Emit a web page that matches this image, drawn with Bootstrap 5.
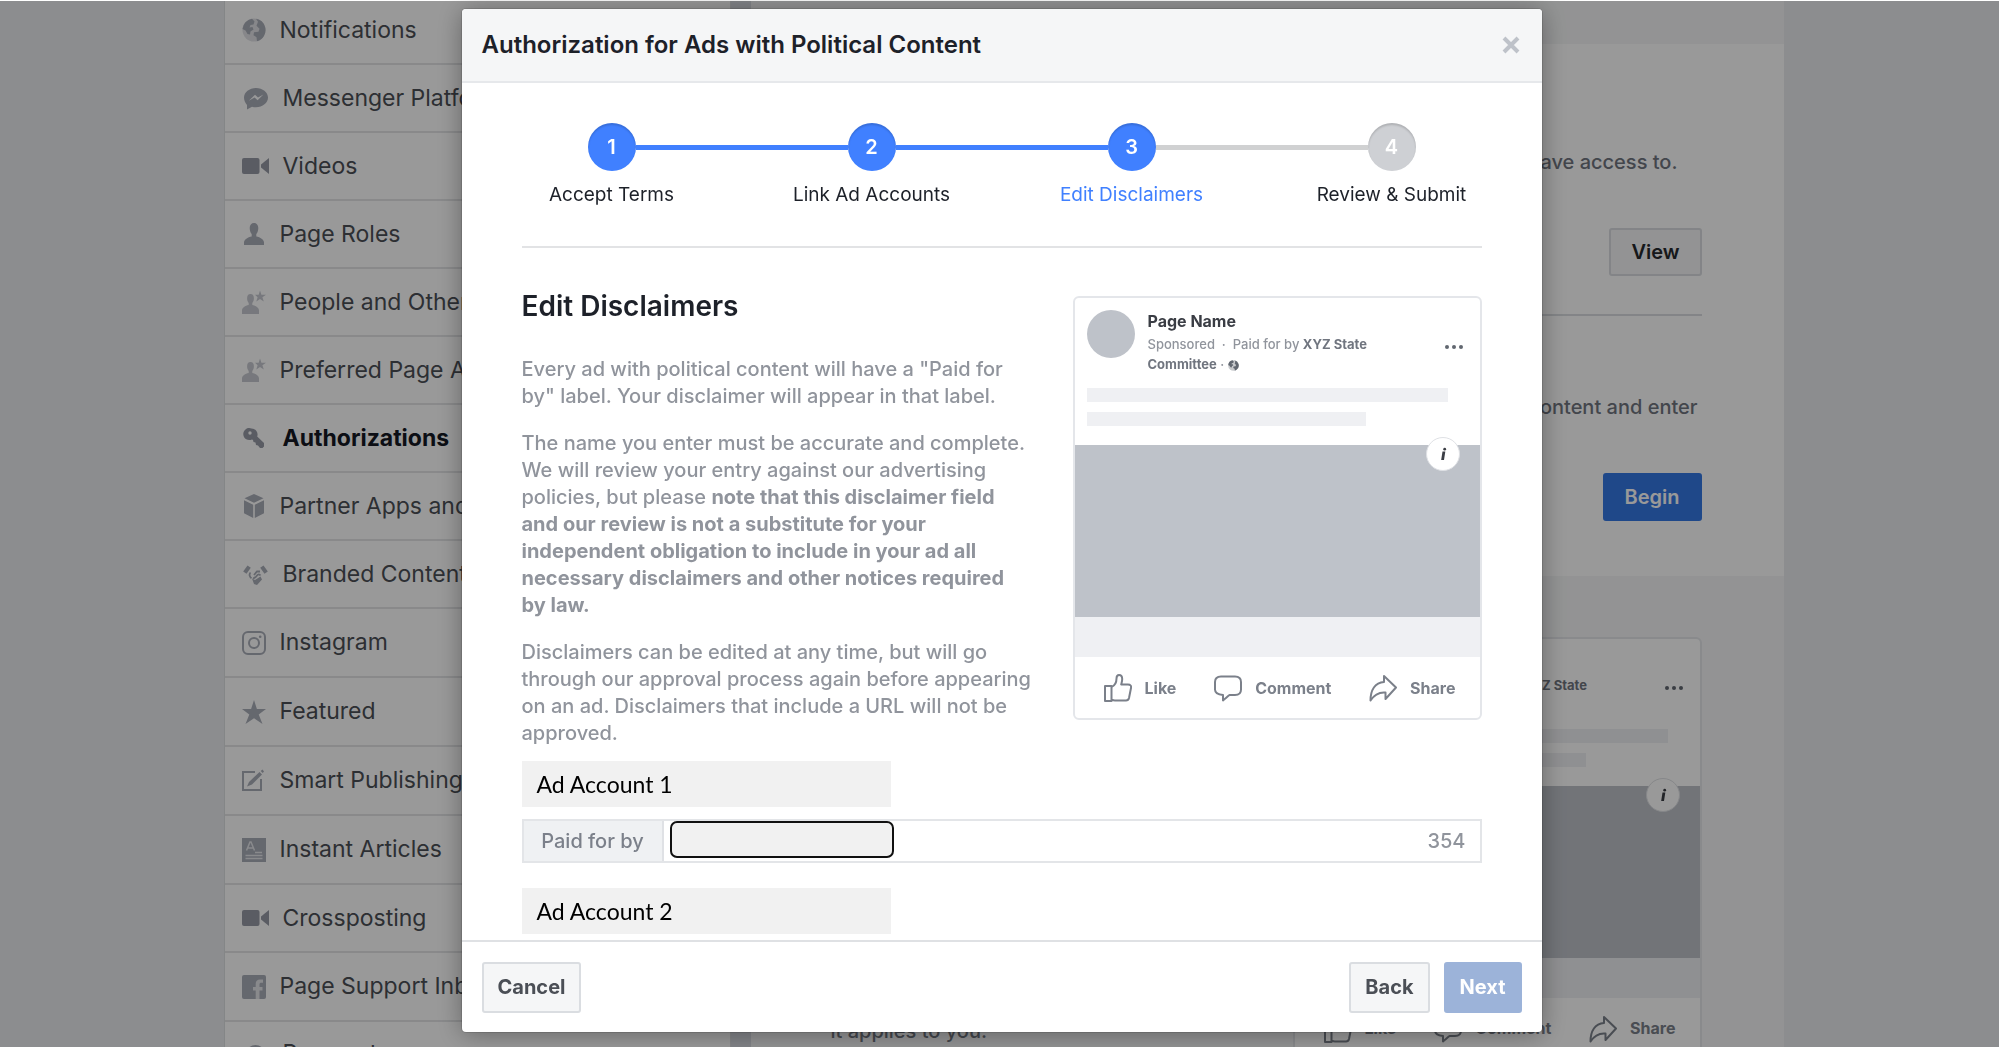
<!DOCTYPE html>
<html lang="en">
<head>
<meta charset="utf-8">
<meta name="viewport" content="width=device-width, initial-scale=1">
<title>Authorization for Ads with Political Content</title>
<link rel="stylesheet" href="https://cdn.jsdelivr.net/npm/bootstrap@5.3.0/dist/css/bootstrap.min.css">
<script src="https://cdn.jsdelivr.net/npm/bootstrap@5.3.0/dist/js/bootstrap.bundle.min.js"></script>
<style>
body{font-family:Inter,"Liberation Sans",sans-serif;background:#fff;height:100vh;overflow:hidden;color:#1d2129}
.page{margin-top:1px;height:100vh;background:#e9ebee;overflow:hidden;padding-left:8px}
.shell{width:100%;max-width:1560px}
.side{width:507px;flex:none;background:#fff;border-left:1px solid #dddfe2;border-right:1px solid #dddfe2;margin-top:-4px}
.side-link{height:68px;flex:none;padding-left:17px;gap:14px;border-bottom:2px solid #e4e5e7;font-size:23px;color:#4b4f56;text-decoration:none;white-space:nowrap}
.side-link.tall{height:69px}
.side-link:last-child{height:64px}
.side-link.on{font-weight:700;color:#141823}
.ico{width:24px;height:24px;flex:none;fill:#a9adb8;color:#a9adb8}
.ico.wide{width:27px}
.ico.deep{fill:#969aa6}
.ico.pale{fill:#c6c9d0}
.gutter{width:20px;flex:none;background:#d9dce3}
.pane{background:#f5f6f7}
.pane-top{height:43px}
.pane-white{background:#fff;height:532px;padding:105px 82px 0 80px;font-size:20px;font-weight:500;line-height:27px;color:#70757f}
.pane-act{padding-top:52px}
.pane-rule{border-top:2px solid #dadde1;margin:38px 0 78px;opacity:1}
.pane-low{padding:61px 82px 0 80px;font-size:20px;font-weight:500;line-height:27px;color:#70757f}
.btn-fb{font-size:20px;font-weight:600;line-height:24px;border-radius:3px;border:2px solid #dadde1;background:#f5f6f7;color:#4b4f56}
.btn-fb.dark{color:#26292e}
.btn-blue,.btn-blue:disabled{background:#3578e5;border-color:#3578e5;color:#fff;opacity:1}
.btn-blue:disabled{background:#9cb3d9;border-color:#9cb3d9}
.pane .btn-fb{padding:10px 20px}
.post{width:409px;border:2px solid #e4e6ea;border-radius:6px;background:#fff;color:#7b808a;overflow:hidden}
.post-head{height:90px;padding:12px 12px 0;gap:13px}
.face{width:48px;height:48px;background:#bec2c9;flex:none}
.post-name{font-size:16px;line-height:22px;margin-bottom:2px;font-weight:700;color:#3a3d44}
.post-meta{font-size:13px;line-height:20px;font-weight:500;color:#90949c}
.post-meta b{font-weight:700;color:#70757f}
.post-dots{width:20px;height:6px;fill:#616770;margin-top:34px;margin-right:4px}
.post-lines{padding-left:12px;height:57px}
.post-line{height:14px;background:#eff0f3;margin-bottom:10px}
.post-shot{height:172px;background:#bec2c9;position:relative}
.post-i{position:absolute;right:20px;top:-8px;width:34px;height:34px;border:1px solid #dfe1e5;background:#fff}
.post-band{height:40px;background:#eff0f3}
.post-acts{height:61px;padding:0 24px 0 29px;font-size:16px;font-weight:700}
.post-act{gap:13px}
.act-ico{width:28px;height:28px;fill:none;stroke:#7b808a;stroke-width:2;stroke-linejoin:round;stroke-linecap:round}
.veil{position:fixed;inset:1px 0 0 0;background:rgba(0,0,0,.4);padding:8px 0 0 4px}
.dlg{width:1080px;background:#fff;border-radius:4px;box-shadow:0 2px 26px rgba(0,0,0,.35),0 0 0 1px rgba(0,0,0,.12);overflow:hidden}
.dlg-head{height:74px;padding:0 20px;background:#f5f6f7;border-bottom:2px solid #e6e8eb}
.dlg-head h1{font-size:24px;font-weight:600;line-height:28px;margin:0}
.x-btn{width:22px;height:22px;border:0;background:none;padding:0}
.dlg-main{padding:40px 60px 6px}
.steps{padding:0 30px;border-bottom:2px solid #e2e3e5;height:125px}
.step{flex:none;width:140px;margin:0 -10px;font-size:19px;line-height:24px;text-align:center;white-space:nowrap}
.dot-n{width:48px;height:48px;border-radius:50%;background:#4080ff;color:#fff;font-size:20px;font-weight:600;margin-bottom:12px;box-shadow:inset 0 2px 2px rgba(0,0,0,.15)}
.dot-n.off{background:#ced0d4}
.step-bar{height:5px;background:#4080ff;flex:1;margin:22px -36px 0}
.step-bar.off{background:#d0d1d2}
.now{color:#4080ff}
.intro{padding-top:48px}
.intro h2{font-size:28px;line-height:32px;font-weight:600;margin:-6px 0 34px}
.intro p{font-size:20px;line-height:27px;font-weight:500;color:#90949c;margin:0 0 20px;white-space:nowrap}
.intro p b{font-weight:700}
.acct{width:369px;height:46px;padding-left:15px;background:#f1f1f1;color:#000;font-family:Lato,sans-serif;font-size:23px}
.acct.first{margin-top:14px}
.paid{margin:12px 0 25px;height:44px;border:2px solid #e3e5e8}
.paid label{width:140px;background:#eff1f3;border-right:2px solid #dfe1e5;font-size:20px;font-weight:500;color:#7b808a}
.paid input{width:224px;height:37px;margin-left:6px;border:2px solid #111;border-radius:7px;background:#f1f1f1;outline:0}
.paid output{font-size:20px;font-weight:500;color:#90949c;padding-right:14px}
.dlg-foot{height:92px;border-top:2px solid #dfe1e4;padding:0 20px;gap:14px}
.dlg-foot .btn-fb{padding:11px 14px;height:51px;font-weight:700}
</style>
</head>
<body>
<svg class="d-none" xmlns="http://www.w3.org/2000/svg">
<symbol id="i-globe" viewBox="0 0 24 24"><circle cx="12" cy="12" r="11.500" opacity=".35"/><path d="M10 .7A11.500 11.500 0 0 0 .5 11l3 1.500 2 3.500 2.500.5.500-3 3-2-1-2.500-3 .5 1-2.500 3-.5 1-3zM14 .7l2 3-1.500 4 3 3-1 3-4.500.5-.5 3 3 2 .5 4a11.500 11.500 0 0 0 8-14.500A11.500 11.500 0 0 0 14 .7z"/></symbol>
<symbol id="i-msg" viewBox="0 0 27 24"><path fill-rule="evenodd" d="M14 2c6.600 0 12 4.300 12 9.600s-5.400 9.700-12 9.700c-1.400 0-2.800-.2-4-.6L5 23.500v-4.600C3.200 17 2 14.500 2 11.600 2 6.300 7.400 2 14 2zM6.800 14.800l5.800-3.200 3 2.600 5.800-5.800-5.400 3-3-2.700z"/></symbol>
<symbol id="i-cam" viewBox="0 0 27 24"><rect y="4" width="17.500" height="16" rx="2"/><path d="M27 4v16l-8-6.500v-3z"/></symbol>
<symbol id="i-user" viewBox="0 0 24 24"><path d="M12 1c2.700 0 4.300 2 4.300 5 0 2.500-.8 4.800-2 6v2.500c4 .8 7.700 3 7.700 6V23H2v-2.500c0-3 3.700-5.200 7.700-6V12c-1.200-1.200-2-3.500-2-6 0-3 1.600-5 4.300-5z"/></symbol>
<symbol id="i-userstar" viewBox="0 0 24 24"><path d="M8.500 4c2.200 0 3.400 1.600 3.400 4.200 0 2-.6 3.700-1.600 4.800V15c3.500.8 6.700 2.600 6.700 5.500V24H0v-3.500C0 17.600 3.200 15.800 6.700 15v-2c-1-1.100-1.600-2.800-1.600-4.800C5.100 5.600 6.300 4 8.500 4z"/><path d="M18 .5l1.400 4.200H24l-3.600 2.600 1.400 4.200-3.800-2.600-3.700 2.600 1.300-4.200L13 4.700h3.700z"/></symbol>
<symbol id="i-key" viewBox="0 0 27 24"><path fill-rule="evenodd" d="M9.500 2.500a6 6 0 0 1 5.700 8L22 17v3.500L20.500 22H18l-2-2.500-2-.5-.5-2.500-2-.5-.5-2-1-.6A6 6 0 1 1 9.500 2.500zM8 5.300a1.700 1.700 0 1 0 0 3.400 1.700 1.700 0 0 0 0-3.400z"/></symbol>
<symbol id="i-box" viewBox="0 0 24 24"><path d="M12 0l9.500 4.300L12 8.800 2.500 4.300zM2 6.300l9.200 4.400V24L2 19.300zM22 6.300l-9.200 4.400V24l9.200-4.700z"/></symbol>
<symbol id="i-shake" viewBox="0 0 27 24"><path d="M5.500 3.500l3.300 2.300-4.300 6L1.200 9.500zM21.500 3.500l-3.300 2.300 4.300 6 3.300-2.300z"/><g fill="none" stroke="currentColor" stroke-width="1.800"><path d="M8.500 10.500c-1.800 2-.8 4.500 1 5.800M11 16c2 .5 3-1 4-2.500s2.500-1.500 3.500 0M12 13l3-3.500h3"/></g><path d="M10 16.500l3 1.500 5.500-3.500 1.500 3-5 5.500-3-1z"/></symbol>
<symbol id="i-insta" viewBox="0 0 24 24"><g fill="none" stroke="currentColor" stroke-width="2"><rect x="1" y="1" width="22" height="22" rx="5"/><circle cx="12" cy="12" r="5"/></g><circle cx="18.200" cy="5.800" r="1.300"/></symbol>
<symbol id="i-star" viewBox="0 0 24 24"><path d="M12 0l2.900 9H24l-7.300 5.500L20.500 24 12 18.200 3.500 24l3.800-9.500L0 9h9.100z"/></symbol>
<symbol id="i-edit" viewBox="0 0 24 24"><path fill="none" stroke="currentColor" stroke-width="2" d="M13 3H1v18h18V10"/><path d="M17.500 3l2.500 2.500L10 15.500 5 17.500 7 13zM18.700 2L20.500.5 22 2.500l-1.300 1.600z"/></symbol>
<symbol id="i-article" viewBox="0 0 24 24"><path d="M0 0h24v24H0z"/><path fill="none" stroke="#e4e6ea" stroke-width="1.500" d="M4.500 12.500L8 4h1l3.500 8.500M6 10h5M13 14.500h7M3.500 17.500h17M3.500 20.500h17"/></symbol>
<symbol id="i-fb" viewBox="0 0 24 24"><path d="M2 0h20a2 2 0 0 1 2 2v20a2 2 0 0 1-2 2H2a2 2 0 0 1-2-2V2a2 2 0 0 1 2-2z"/><path fill="#e4e6ea" d="M17.500 24v-8.500h3V12h-3V9.500c0-1.200.5-1.800 1.800-1.800H21V4.500h-3c-2.800 0-4.300 1.700-4.300 4.300V12H11v3.500h2.700V24z"/></symbol>
<symbol id="i-coin" viewBox="0 0 27 24"><circle cx="13.500" cy="14" r="10"/></symbol>
<symbol id="i-like" viewBox="0 0 28 28"><path d="M1 12h6.500v15H1zM7.500 13c3.500-1.500 5-4 5-8.500 0-2 .8-3.500 2.500-3.500 2.300 0 3.200 2 3.200 4 0 2.300-.7 4-1 5.500H24c2.500 0 3.500 1.500 3 3.500l-2 10c-.5 2-1.500 2.500-3 2.500H11c-1.500 0-2.500-.5-3.500-1"/></symbol>
<symbol id="i-comment" viewBox="0 0 28 28"><path d="M7 2.500h14c3.500 0 6 2 6 5.500v7.500c0 3.500-2.500 5.500-6 5.500h-5.500c-2 1.500-4 3.500-6.500 5.500V21C4.500 20.500 1 19 1 15.500V8c0-3.500 2.500-5.500 6-5.500z"/></symbol>
<symbol id="i-share" viewBox="0 0 28 28"><path d="M15 2l12 11.500L16.500 25v-6.500C11 18 6 19.500 1.500 26.500 1.500 16 6 8.500 15 8z"/></symbol>
</svg>

<div class="page d-flex justify-content-center">
<div class="shell d-flex">
<nav class="side d-flex flex-column">
<a href="#" class="side-link d-flex align-items-center"><svg class="ico"><use href="#i-globe"/></svg>Notifications</a>
<a href="#" class="side-link d-flex align-items-center"><svg class="ico wide"><use href="#i-msg"/></svg>Messenger Platform</a>
<a href="#" class="side-link d-flex align-items-center"><svg class="ico wide deep"><use href="#i-cam"/></svg>Videos</a>
<a href="#" class="side-link d-flex align-items-center"><svg class="ico"><use href="#i-user"/></svg>Page Roles</a>
<a href="#" class="side-link d-flex align-items-center"><svg class="ico pale"><use href="#i-userstar"/></svg>People and Other Pages</a>
<a href="#" class="side-link d-flex align-items-center"><svg class="ico pale"><use href="#i-userstar"/></svg>Preferred Page Audience</a>
<a href="#" class="side-link on d-flex align-items-center"><svg class="ico wide deep"><use href="#i-key"/></svg>Authorizations</a>
<a href="#" class="side-link d-flex align-items-center"><svg class="ico"><use href="#i-box"/></svg>Partner Apps and Services</a>
<a href="#" class="side-link d-flex align-items-center"><svg class="ico wide"><use href="#i-shake"/></svg>Branded Content</a>
<a href="#" class="side-link tall d-flex align-items-center"><svg class="ico"><use href="#i-insta"/></svg>Instagram</a>
<a href="#" class="side-link tall d-flex align-items-center"><svg class="ico"><use href="#i-star"/></svg>Featured</a>
<a href="#" class="side-link tall d-flex align-items-center"><svg class="ico"><use href="#i-edit"/></svg>Smart Publishing</a>
<a href="#" class="side-link tall d-flex align-items-center"><svg class="ico"><use href="#i-article"/></svg>Instant Articles</a>
<a href="#" class="side-link d-flex align-items-center"><svg class="ico wide deep"><use href="#i-cam"/></svg>Crossposting</a>
<a href="#" class="side-link tall d-flex align-items-center"><svg class="ico"><use href="#i-fb"/></svg>Page Support Inbox</a>
<a href="#" class="side-link d-flex align-items-center"><svg class="ico wide"><use href="#i-coin"/></svg>Payments</a>
</nav>
<div class="gutter"></div>
<main class="pane flex-grow-1">
<div class="pane-top"></div>
<section class="pane-white">
<p class="text-end me-4 mb-0">have access to.</p>
<div class="pane-act d-flex justify-content-end"><button type="button" class="btn btn-fb dark">View</button></div>
<hr class="pane-rule">
<p class="text-end me-1 mb-0">content and enter</p>
<div class="pane-act d-flex justify-content-end"><button type="button" class="btn btn-fb btn-blue">Begin</button></div>
</section>
<section class="pane-low d-flex justify-content-between">
<p class="mb-3 align-self-end">it applies to you.</p>
<article class="post">
<div class="post-head d-flex"><div class="face rounded-circle"></div><div class="flex-grow-1"><div class="post-name">Page Name</div><div class="post-meta">Sponsored &nbsp;·&nbsp; Paid for by <b>XYZ State<br>Committee</b> · <svg width="11" height="11" fill="#616770"><use href="#i-globe"/></svg></div></div><svg class="post-dots" viewBox="0 0 20 6"><circle cx="3" cy="3" r="2"/><circle cx="10" cy="3" r="2"/><circle cx="17" cy="3" r="2"/></svg></div>
<div class="post-lines"><div class="post-line" style="width:92%"></div><div class="post-line" style="width:71%"></div></div>
<div class="post-shot"><div class="post-i rounded-circle d-flex align-items-center justify-content-center"><svg width="8" height="14" viewBox="0 0 8 14" fill="#3a3d44"><path d="M3.500 4.500h2.800L5 13H2.200z"/><circle cx="5.700" cy="2.200" r="1.400"/></svg></div></div>
<div class="post-band"></div>
<div class="post-acts d-flex align-items-center justify-content-between"><span class="post-act d-flex align-items-center"><svg class="act-ico"><use href="#i-like"/></svg>Like</span><span class="post-act d-flex align-items-center"><svg class="act-ico"><use href="#i-comment"/></svg>Comment</span><span class="post-act d-flex align-items-center"><svg class="act-ico"><use href="#i-share"/></svg>Share</span></div>
</article>
</section>
</main>
</div>
</div>

<div class="veil d-flex justify-content-center align-items-start">
<div class="dlg" role="dialog" aria-labelledby="dlg-title">
<header class="dlg-head d-flex align-items-center justify-content-between">
<h1 id="dlg-title">Authorization for Ads with Political Content</h1>
<button type="button" class="x-btn d-flex align-items-center justify-content-center" aria-label="Close"><svg width="18" height="18" viewBox="0 0 18 18" stroke="#bec2c9" stroke-width="4"><path d="M2 2l14 14M16 2L2 16"/></svg></button>
</header>
<div class="dlg-main">
<div class="steps d-flex">
<div class="step d-flex flex-column align-items-center"><span class="dot-n d-flex align-items-center justify-content-center">1</span>Accept Terms</div>
<div class="step-bar"></div>
<div class="step d-flex flex-column align-items-center"><span class="dot-n d-flex align-items-center justify-content-center">2</span>Link Ad Accounts</div>
<div class="step-bar"></div>
<div class="step now d-flex flex-column align-items-center"><span class="dot-n d-flex align-items-center justify-content-center">3</span>Edit Disclaimers</div>
<div class="step-bar off"></div>
<div class="step d-flex flex-column align-items-center"><span class="dot-n off d-flex align-items-center justify-content-center">4</span>Review &amp; Submit</div>
</div>
<div class="intro d-flex justify-content-between align-items-start">
<div>
<h2>Edit Disclaimers</h2>
<p>Every ad with political content will have a "Paid for<br>by" label. Your disclaimer will appear in that label.</p>
<p>The name you enter must be accurate and complete.<br>We will review your entry against our advertising<br>policies, but please <b>note that this disclaimer field<br>and our review is not a substitute for your<br>independent obligation to include in your ad all<br>necessary disclaimers and other notices required<br>by law.</b></p>
<p class="mb-0">Disclaimers can be edited at any time, but will go<br>through our approval process again before appearing<br>on an ad. Disclaimers that include a URL will not be<br>approved.</p>
</div>
<article class="post">
<div class="post-head d-flex"><div class="face rounded-circle"></div><div class="flex-grow-1"><div class="post-name">Page Name</div><div class="post-meta">Sponsored &nbsp;·&nbsp; Paid for by <b>XYZ State<br>Committee</b> · <svg width="11" height="11" fill="#616770"><use href="#i-globe"/></svg></div></div><svg class="post-dots" viewBox="0 0 20 6"><circle cx="3" cy="3" r="2"/><circle cx="10" cy="3" r="2"/><circle cx="17" cy="3" r="2"/></svg></div>
<div class="post-lines"><div class="post-line" style="width:92%"></div><div class="post-line" style="width:71%"></div></div>
<div class="post-shot"><div class="post-i rounded-circle d-flex align-items-center justify-content-center"><svg width="8" height="14" viewBox="0 0 8 14" fill="#3a3d44"><path d="M3.500 4.500h2.800L5 13H2.200z"/><circle cx="5.700" cy="2.200" r="1.400"/></svg></div></div>
<div class="post-band"></div>
<div class="post-acts d-flex align-items-center justify-content-between"><span class="post-act d-flex align-items-center"><svg class="act-ico"><use href="#i-like"/></svg>Like</span><span class="post-act d-flex align-items-center"><svg class="act-ico"><use href="#i-comment"/></svg>Comment</span><span class="post-act d-flex align-items-center"><svg class="act-ico"><use href="#i-share"/></svg>Share</span></div>
</article>
</div>
<div class="acct first d-flex align-items-center">Ad Account 1</div>
<div class="paid d-flex">
<label for="paid1" class="d-flex align-items-center justify-content-center">Paid for by</label>
<input id="paid1" type="text">
<output for="paid1" class="ms-auto align-self-center">354</output>
</div>
<div class="acct d-flex align-items-center">Ad Account 2</div>
</div>
<footer class="dlg-foot d-flex align-items-center">
<button type="button" class="btn btn-fb me-auto">Cancel</button>
<button type="button" class="btn btn-fb">Back</button>
<button type="button" class="btn btn-fb btn-blue" disabled>Next</button>
</footer>
</div>
</div>
</body>
</html>
